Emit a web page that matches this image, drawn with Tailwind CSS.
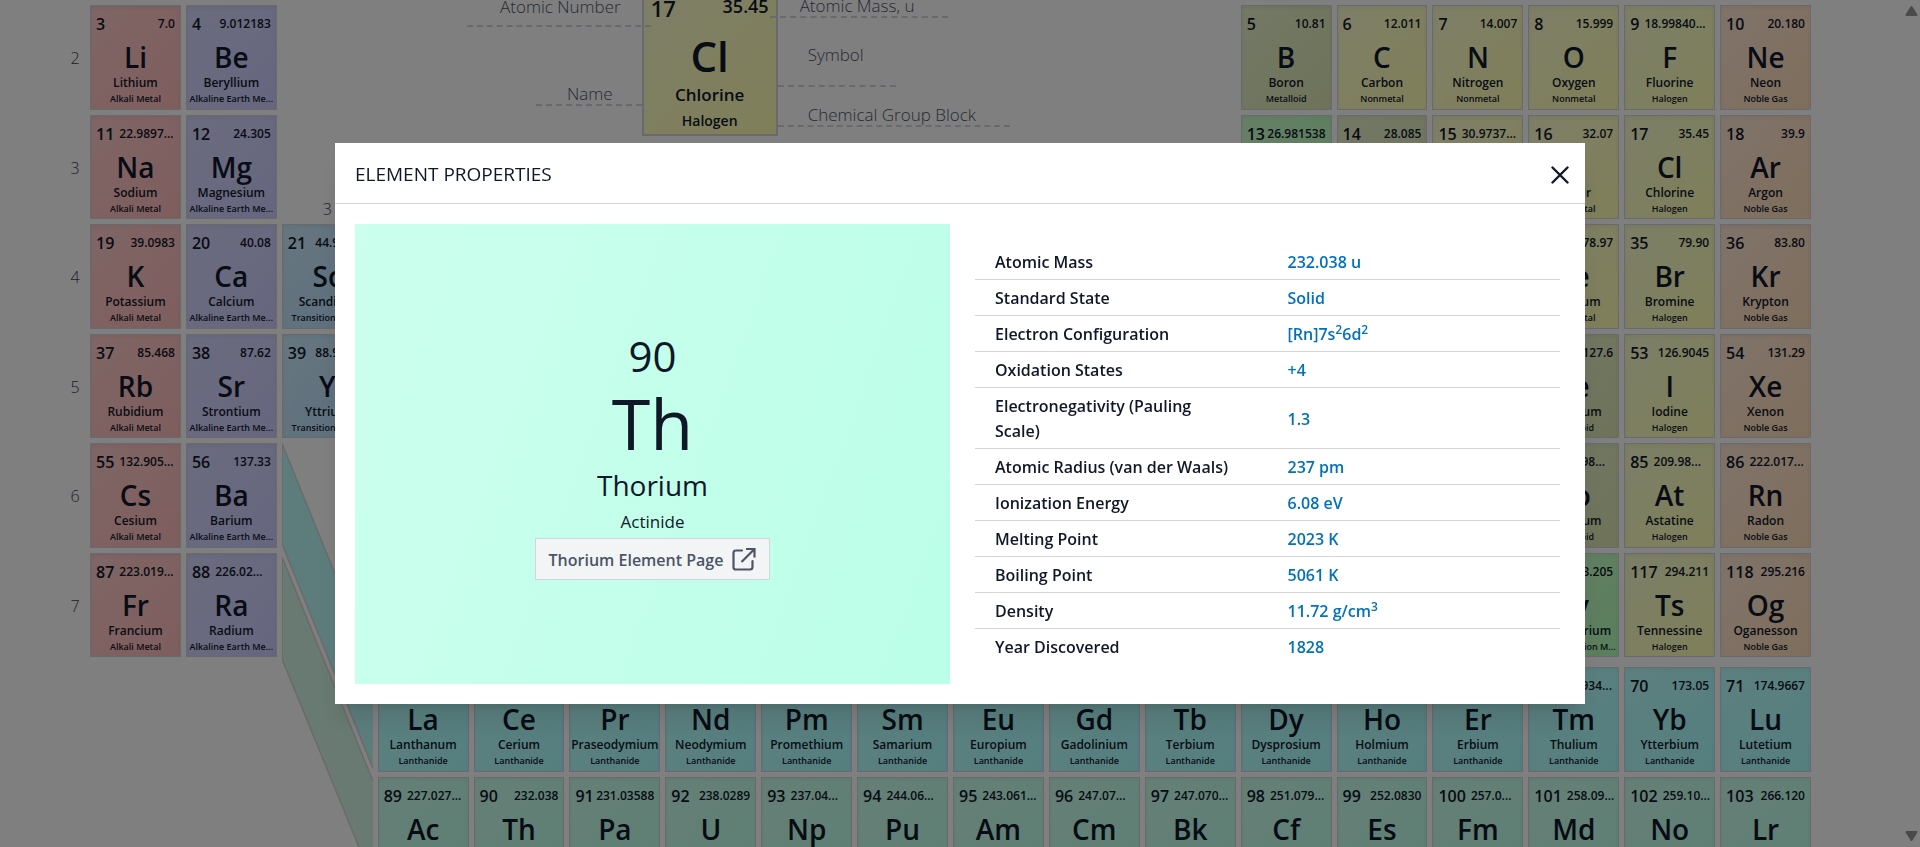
<!DOCTYPE html>
<html lang="en">
<head>
<meta charset="utf-8">
<meta name="viewport" content="width=device-width, initial-scale=1">
<title>Periodic Table of Elements</title>
<script src="https://cdn.jsdelivr.net/npm/@tailwindcss/browser@4"></script>
</head>
<body class="h-screen overflow-hidden bg-white font-['Segoe_UI','Open_Sans',sans-serif] text-gray-900">
<main class="h-screen overflow-hidden">
  <div id="table" class="grid grid-cols-[20px_repeat(18,minmax(0,1fr))] gap-[5px] pt-[5px] pr-[109px] pl-[65px]">
    <section aria-label="Legend" class="col-start-5 col-span-9 row-start-1 row-span-2 -mt-[26px] flex items-start pl-[88px] text-[17px] leading-5 font-light text-gray-600">
      <div class="z-10 flex w-[176px] flex-col items-end">
        <div class="-mr-[9px] w-[184px] border-b-2 border-dashed border-gray-300 pt-[18px] pr-[30px] pb-[8px] text-right">Atomic Number</div>
        <div class="mt-[57px] w-[106px] border-b-2 border-dashed border-gray-300 pr-[29px] text-right">Name</div>
      </div>
      <div class="h-[157px] w-[136px] border-2 border-gray-300 bg-linear-to-br from-[#fdfdd0] to-[#ffffb3] pt-[9px] text-center font-semibold text-gray-900">
        <div class="flex h-9 items-center justify-between px-[7px]">
          <span class="text-[22px]">17</span><span class="-mt-1 text-[18px]">35.45</span>
        </div>
        <div class="mt-1 text-[42px] leading-[52px]">Cl</div>
        <div class="text-[17px] leading-[26px]">Chlorine</div>
        <div class="text-[14px] leading-[26px]">Halogen</div>
      </div>
      <div class="z-10 flex flex-col items-start whitespace-nowrap">
        <div class="-ml-2 w-[178px] border-b-2 border-dashed border-gray-300 pt-[17px] pl-[30px]">Atomic Mass, u</div>
        <div class="mt-[27px] w-[118px] border-b-2 border-dashed border-gray-300 pb-5 pl-[30px]">Symbol</div>
        <div class="mt-[18px] w-[232px] border-b-2 border-dashed border-gray-300 pl-[30px]">Chemical Group Block</div>
      </div>
    </section>

    <div class="relative col-start-4 row-start-5 row-end-10">
      <svg class="absolute inset-0 h-full w-full" viewBox="0 0 91 438" preserveAspectRatio="none" aria-hidden="true">
        <path d="M0 1L91 224V325L0 101Z" fill="#bbfafa"/>
        <path d="M0 0.5L91 224M91 325L0 101V0" fill="none" stroke="#d5d5d5" stroke-width="1.5"/>
        <path d="M0 114L91 338V438L0 216Z" fill="#d0f5e4"/>
        <path d="M0 114L91 338M91 438L0 216V114" fill="none" stroke="#d5d5d5" stroke-width="1.5"/>
      </svg>
    </div>
    <div class="col-start-4 row-start-2 self-end text-center text-[16px] leading-5 font-light text-gray-700">3</div>
    <div class="row-start-7 h-0"></div>
  </div>
</main>

<div class="fixed inset-0 z-20 flex items-center justify-center bg-black/50">
  <div role="dialog" aria-modal="true" aria-labelledby="dialog-title" class="w-[1250px] max-w-full bg-white shadow-xl">
    <header class="flex h-[61px] items-center justify-between border-b border-gray-300 pt-0.5 pr-4 pl-5">
      <h2 id="dialog-title" class="text-[19px]">ELEMENT PROPERTIES</h2>
      <button type="button" aria-label="Close" class="mt-0.5">
        <svg class="h-[18px] w-[18px]" viewBox="0 0 18 18" fill="none" stroke="#111827" stroke-width="2.4" stroke-linecap="round" aria-hidden="true"><path d="M1.5 1.5L16.5 16.5M16.5 1.5L1.5 16.5"/></svg>
      </button>
    </header>
    <div class="grid grid-cols-2 gap-5 p-5">
      <div class="flex min-h-[460px] flex-col items-center justify-center bg-linear-110 from-[#ccffee] to-[#bbffe8] text-center">
        <div class="text-[42px] leading-[56px]">90</div>
        <div class="text-[70px] leading-[78px]">Th</div>
        <div class="pt-0.5 text-[28px] leading-[42px]">Thorium</div>
        <div class="text-[17px] leading-8">Actinide</div>
        <a href="#thorium" class="flex h-[42px] items-center gap-[9px] border border-gray-300 bg-gray-100 px-[13px] text-[16px] font-semibold text-gray-600"><span class="pt-0.5">Thorium Element Page</span>
          <svg class="h-6 w-6" viewBox="0 0 24 24" fill="none" stroke="#4b5563" stroke-width="2.2" stroke-linejoin="round" aria-hidden="true"><path stroke-linecap="round" d="M10 3.5H4Q1.500 3.500 1.500 6V20.500Q1.500 22.500 4 22.500H18Q20.500 22.500 20.500 20V14"/><path stroke-linejoin="miter" d="M14 2H22.500V10.500M22.500 2L9.500 15"/></svg>
        </a>
      </div>
      <div class="flex items-center px-[5px]">
        <table class="w-full table-fixed border-collapse text-left text-[16px] leading-[25px]">
          <tbody id="props" class="divide-y divide-gray-300">
            <tr><th scope="row" class="pt-[6px] pb-1 pr-8 pl-5 font-semibold">Atomic Mass</th><td class="px-5 pt-[6px] pb-1 font-semibold text-[#0071bc]">232.038 u</td></tr>
            <tr><th scope="row" class="pt-[6px] pb-1 pr-8 pl-5 font-semibold">Standard State</th><td class="px-5 pt-[6px] pb-1 font-semibold text-[#0071bc]">Solid</td></tr>
            <tr><th scope="row" class="pt-[6px] pb-1 pr-8 pl-5 font-semibold">Electron Configuration</th><td class="px-5 pt-[6px] pb-1 font-semibold text-[#0071bc]">[Rn]7s<sup>2</sup>6d<sup>2</sup></td></tr>
            <tr><th scope="row" class="pt-[6px] pb-1 pr-8 pl-5 font-semibold">Oxidation States</th><td class="px-5 pt-[6px] pb-1 font-semibold text-[#0071bc]">+4</td></tr>
            <tr><th scope="row" class="pt-[6px] pb-1 pr-8 pl-5 font-semibold">Electronegativity (Pauling Scale)</th><td class="px-5 pt-[6px] pb-1 font-semibold text-[#0071bc]">1.3</td></tr>
            <tr><th scope="row" class="pt-[6px] pb-1 pr-8 pl-5 font-semibold">Atomic Radius (van der Waals)</th><td class="px-5 pt-[6px] pb-1 font-semibold text-[#0071bc]">237 pm</td></tr>
            <tr><th scope="row" class="pt-[6px] pb-1 pr-8 pl-5 font-semibold">Ionization Energy</th><td class="px-5 pt-[6px] pb-1 font-semibold text-[#0071bc]">6.08 eV</td></tr>
            <tr><th scope="row" class="pt-[6px] pb-1 pr-8 pl-5 font-semibold">Melting Point</th><td class="px-5 pt-[6px] pb-1 font-semibold text-[#0071bc]">2023 K</td></tr>
            <tr><th scope="row" class="pt-[6px] pb-1 pr-8 pl-5 font-semibold">Boiling Point</th><td class="px-5 pt-[6px] pb-1 font-semibold text-[#0071bc]">5061 K</td></tr>
            <tr><th scope="row" class="pt-[6px] pb-1 pr-8 pl-5 font-semibold">Density</th><td class="px-5 pt-[6px] pb-1 font-semibold text-[#0071bc]">11.72 g/cm<sup>3</sup></td></tr>
            <tr><th scope="row" class="pt-[6px] pb-1 pr-8 pl-5 font-semibold">Year Discovered</th><td class="px-5 pt-[6px] pb-1 font-semibold text-[#0071bc]">1828</td></tr>
          </tbody>
        </table>
      </div>
    </div>
  </div>
</div>

<div class="pointer-events-none fixed inset-y-0 right-0 z-30 flex w-[17px] flex-col items-center justify-between py-[5px]" aria-hidden="true">
  <svg class="h-3 w-[13px]" viewBox="0 0 13 12"><path d="M6.500 2L11.500 10H1.500Z" fill="#4a4a4a" stroke="#4a4a4a" stroke-width="2" stroke-linejoin="round"/></svg>
  <svg class="h-3 w-[13px]" viewBox="0 0 13 12"><path d="M6.500 10L11.500 2H1.500Z" fill="#4a4a4a" stroke="#4a4a4a" stroke-width="2" stroke-linejoin="round"/></svg>
</div>

<script>
// Block key -> [label, gradient classes]
const blocks = {
  ak: ['Alkali Metal', 'from-[#ffcccc] to-[#ffbbbb]'],
  ae: ['Alkaline Earth Me...', 'from-[#d8d8ff] to-[#ccccff]'],
  tm: ['Transition Metal', 'from-[#cceeff] to-[#bbddff]'],
  ml: ['Metalloid', 'from-[#e6f2cc] to-[#dde6b3]'],
  nm: ['Nonmetal', 'from-[#fdfdd0] to-[#ffffb3]'],
  ha: ['Halogen', 'from-[#f8fdd0] to-[#ffffb3]'],
  ng: ['Noble Gas', 'from-[#ffe6d5] to-[#ffddb8]'],
  pt: ['Post-Transition M...', 'from-[#ccffcc] to-[#b3ffb8]'],
  la: ['Lanthanide', 'from-[#bbffff] to-[#aaffff]'],
  ac: ['Actinide', 'from-[#ccffee] to-[#bbffe8]']
};
// number, mass, symbol, name, block, column, grid row
const elements = [
  [3,'7.0','Li','Lithium','ak',1,1],[4,'9.012183','Be','Beryllium','ae',2,1],
  [5,'10.81','B','Boron','ml',13,1],[6,'12.011','C','Carbon','nm',14,1],[7,'14.007','N','Nitrogen','nm',15,1],[8,'15.999','O','Oxygen','nm',16,1],[9,'18.99840...','F','Fluorine','ha',17,1],[10,'20.180','Ne','Neon','ng',18,1],
  [11,'22.9897...','Na','Sodium','ak',1,2],[12,'24.305','Mg','Magnesium','ae',2,2],
  [13,'26.981538','Al','Aluminum','pt',13,2],[14,'28.085','Si','Silicon','ml',14,2],[15,'30.9737...','P','Phosphorus','nm',15,2],[16,'32.07','S','Sulfur','nm',16,2],[17,'35.45','Cl','Chlorine','ha',17,2],[18,'39.9','Ar','Argon','ng',18,2],
  [19,'39.0983','K','Potassium','ak',1,3],[20,'40.08','Ca','Calcium','ae',2,3],[21,'44.95591','Sc','Scandium','tm',3,3],
  [34,'78.97','Se','Selenium','nm',16,3],[35,'79.90','Br','Bromine','ha',17,3],[36,'83.80','Kr','Krypton','ng',18,3],
  [37,'85.468','Rb','Rubidium','ak',1,4],[38,'87.62','Sr','Strontium','ae',2,4],[39,'88.90584','Y','Yttrium','tm',3,4],
  [52,'127.6','Te','Tellurium','ml',16,4],[53,'126.9045','I','Iodine','ha',17,4],[54,'131.29','Xe','Xenon','ng',18,4],
  [55,'132.905...','Cs','Cesium','ak',1,5],[56,'137.33','Ba','Barium','ae',2,5],
  [84,'208.98...','Po','Polonium','ml',16,5],[85,'209.98...','At','Astatine','ha',17,5],[86,'222.017...','Rn','Radon','ng',18,5],
  [87,'223.019...','Fr','Francium','ak',1,6],[88,'226.02...','Ra','Radium','ae',2,6],
  [116,'293.205','Lv','Livermorium','pt',16,6],[117,'294.211','Ts','Tennessine','ha',17,6],[118,'295.216','Og','Oganesson','ng',18,6],
  [57,'138.9055','La','Lanthanum','la',4,8],[58,'140.116','Ce','Cerium','la',5,8],[59,'140.90...','Pr','Praseodymium','la',6,8],[60,'144.24','Nd','Neodymium','la',7,8],[61,'144.91...','Pm','Promethium','la',8,8],[62,'150.4','Sm','Samarium','la',9,8],[63,'151.964','Eu','Europium','la',10,8],[64,'157.2','Gd','Gadolinium','la',11,8],[65,'158.92...','Tb','Terbium','la',12,8],[66,'162.500','Dy','Dysprosium','la',13,8],[67,'164.93...','Ho','Holmium','la',14,8],[68,'167.26','Er','Erbium','la',15,8],[69,'168.934...','Tm','Thulium','la',16,8],[70,'173.05','Yb','Ytterbium','la',17,8],[71,'174.9667','Lu','Lutetium','la',18,8],
  [89,'227.027...','Ac','Actinium','ac',4,9],[90,'232.038','Th','Thorium','ac',5,9],[91,'231.03588','Pa','Protactinium','ac',6,9],[92,'238.0289','U','Uranium','ac',7,9],[93,'237.04...','Np','Neptunium','ac',8,9],[94,'244.06...','Pu','Plutonium','ac',9,9],[95,'243.061...','Am','Americium','ac',10,9],[96,'247.07...','Cm','Curium','ac',11,9],[97,'247.070...','Bk','Berkelium','ac',12,9],[98,'251.079...','Cf','Californium','ac',13,9],[99,'252.0830','Es','Einsteinium','ac',14,9],[100,'257.0...','Fm','Fermium','ac',15,9],[101,'258.09...','Md','Mendelevium','ac',16,9],[102,'259.10...','No','Nobelium','ac',17,9],[103,'266.120','Lr','Lawrencium','ac',18,9]
];
const cells = elements.map(([n, mass, sym, name, b, col, row]) => {
  const side = mass.endsWith('...') ? 'ml-[5px]' : 'ml-auto';
  return `<button type="button" style="grid-column:${col + 1};grid-row:${row}" class="flex aspect-[20/23] min-w-0 flex-col overflow-hidden border border-gray-300 bg-linear-to-br ${blocks[b][1]} pt-[6px] text-center font-semibold whitespace-nowrap inset-shadow-sm">
    <span class="flex h-6 w-full items-center px-[5px]"><span class="text-[16px]">${n}</span><span class="${side} text-[12px]">${mass}</span></span>
    <span class="mt-1 w-full text-[28px] leading-[34px]">${sym}</span>
    <span class="mt-px w-full text-[12px] leading-4">${name}</span>
    <span class="w-full text-[9px] leading-4">${blocks[b][0]}</span>
  </button>`;
});
const periods = [2, 3, 4, 5, 6, 7].map((p, i) =>
  `<div style="grid-column:1;grid-row:${i + 1}" class="self-center pt-0.5 text-center text-[16px] font-light text-gray-700">${p}</div>`);
document.getElementById('table').insertAdjacentHTML('beforeend', periods.join('') + cells.join(''));
</script>
</body>
</html>
